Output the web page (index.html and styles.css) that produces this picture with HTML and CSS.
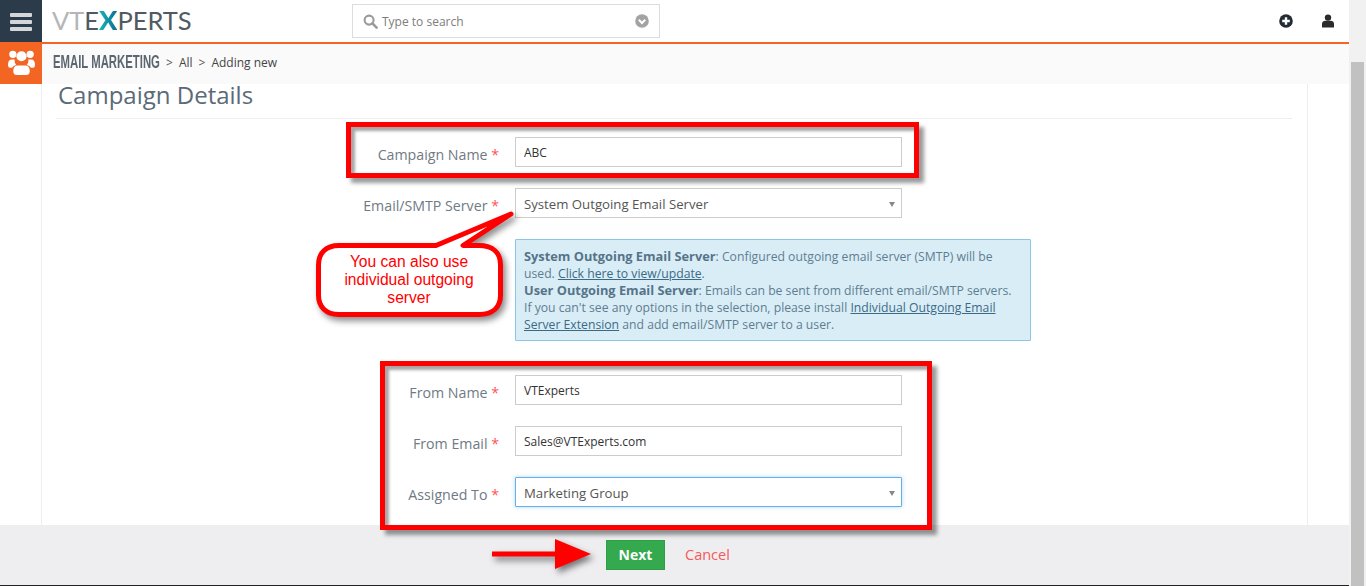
FILE: index.html
```html
<!DOCTYPE html>
<html lang="en">
<head>
    <meta charset="UTF-8">
    <meta name="viewport" content="width=device-width, initial-scale=1.0">
    <title>Email Marketing - Adding new</title>
    <link rel="stylesheet" href="styles.css">
</head>
<body>

    <div class="page">
        <div class="main">
            <header class="topbar">
                <div class="menu-tile">
                    <span class="bar"></span>
                    <span class="bar"></span>
                    <span class="bar"></span>
                </div>
                <div class="logo">
                    <span class="logo-light">VT</span><span>E</span><span class="logo-x">X</span><span>PERTS</span>
                </div>
                <div class="search">
                    <svg class="search-icon" viewBox="0 0 16 16" width="15" height="15">
                        <circle cx="6.5" cy="6.5" r="4.8" fill="none" stroke="#9a9a9a" stroke-width="2.2"/>
                        <path d="M10 10l4.5 4.5" stroke="#9a9a9a" stroke-width="2.8" stroke-linecap="round"/>
                    </svg>
                    <span class="search-text">Type to search</span>
                    <svg class="search-arrow" viewBox="0 0 14 14" width="14" height="14">
                        <circle cx="7" cy="7" r="6.8" fill="#a3a3a3"/>
                        <path d="M3.8 5.8L7 9l3.2-3.2" fill="none" stroke="#fff" stroke-width="2"/>
                    </svg>
                </div>
                <div class="top-icons">
                    <svg viewBox="0 0 14 14" width="14" height="14">
                        <circle cx="7" cy="7" r="6.8" fill="#222b33"/>
                        <path d="M7 3.2v7.6M3.2 7h7.6" stroke="#fff" stroke-width="2.4"/>
                    </svg>
                    <svg viewBox="0 0 14 14" width="14" height="14">
                        <circle cx="7" cy="3.6" r="3.2" fill="#2b2b2b"/>
                        <path d="M1 13.5V10c0-2 1.5-3.2 3.5-3.2h5c2 0 3.500 1.200 3.500 3.200v3.500z" fill="#2b2b2b"/>
                    </svg>
                </div>
            </header>

            <div class="subbar">
                <div class="module-tile">
                    <svg viewBox="0 0 28 26" width="27" height="25">
                        <circle cx="5" cy="4.500" r="3.800" fill="#fff"/>
                        <circle cx="23" cy="4.500" r="3.800" fill="#fff"/>
                        <circle cx="14" cy="6.500" r="5.300" fill="#fff"/>
                        <path d="M0 15c0-3 1.500-5 4-5h3c-.5 1.500 0 4 1.500 5.500-2 .5-3.500 1.500-4.300 3H2c-1.500 0-2-1.500-2-3.500z" fill="#fff"/>
                        <path d="M28 15c0-3-1.500-5-4-5h-3c.5 1.500 0 4-1.500 5.500 2 .5 3.500 1.500 4.300 3H26c1.500 0 2-1.500 2-3.500z" fill="#fff"/>
                        <path d="M5.500 21c0-3 2-5 4.500-5h8c2.500 0 4.500 2 4.500 5v1.500c0 2-1.500 3.500-3.500 3.500H9c-2 0-3.500-1.500-3.500-3.500z" fill="#fff"/>
                    </svg>
                </div>
                <div class="crumbs">
                    <span class="crumb-module">EMAIL MARKETING</span>
                    <span class="crumb-sep">&gt;</span>
                    <span>All</span>
                    <span class="crumb-sep">&gt;</span>
                    <span>Adding new</span>
                </div>
            </div>

            <div class="content">
                <div class="panel">
                    <h2 class="panel-title">Campaign Details</h2>
                    <div class="form">
                        <label class="field-label">Campaign Name <i>*</i></label>
                        <input class="field" type="text" value="ABC" readonly>

                        <label class="field-label">Email/SMTP Server <i>*</i></label>
                        <div class="select"><span>System Outgoing Email Server</span></div>

                        <div class="info-box">
                            <b>System Outgoing Email Server</b>: Configured outgoing email server (SMTP) will be<br>
                            used. <u>Click here to view/update</u>.<br>
                            <b>User Outgoing Email Server</b>: Emails can be sent from different email/SMTP servers.<br>
                            If you can't see any options in the selection, please install <u>Individual Outgoing Email</u><br>
                            <u>Server Extension</u> and add email/SMTP server to a user.
                        </div>

                        <label class="field-label from-first">From Name <i>*</i></label>
                        <input class="field from-first" type="text" value="VTExperts" readonly>

                        <label class="field-label">From Email <i>*</i></label>
                        <input class="field" type="text" value="Sales@VTExperts.com" readonly>

                        <label class="field-label">Assigned To <i>*</i></label>
                        <div class="select focused"><span>Marketing Group</span></div>
                    </div>
                </div>
            </div>

            <footer class="actions">
                <button class="btn-next">Next</button>
                <a class="cancel">Cancel</a>
            </footer>
        </div>

        <div class="scrollbar"><div class="thumb"></div></div>
    </div>

    <!-- annotations drawn over the screenshot -->
    <div class="mark mark-name"></div>
    <div class="mark mark-from"></div>

    <svg class="callout" viewBox="0 0 215 112" width="215" height="112">
        <path d="M36 34.500H133L208 3L160 34.500H176C190 34.500 197.500 42 197.500 54V84C197.500 96 190 103.500 176 103.500H36C23 103.500 15.500 96 15.500 84V54C15.500 42 23 34.500 36 34.500Z"
              fill="#fff" stroke="#f00" stroke-width="5" stroke-linejoin="round"/>
    </svg>
    <div class="callout-text">You can also use<br>individual outgoing<br>server</div>

    <svg class="arrow" viewBox="0 0 102 32" width="102" height="32">
        <path d="M1 12.500H64V0L100 15L64 30V17.500H1z" fill="#f00"/>
    </svg>

</body>
</html>
```

FILE: styles.css
```css
/* base */
html, body {
    margin: 0;
    height: 100%;
    overflow: hidden;
}

body {
    font-family: "Open Sans", Arial, sans-serif;
    font-size: 13px;
    color: #333;
    background: #fff;
}

.page {
    display: flex;
    height: 586px;
}

.main {
    flex: 1;
    display: flex;
    flex-direction: column;
    min-width: 0;
}

/* top bar */
.topbar {
    display: flex;
    align-items: center;
    height: 42px;
    border-bottom: 2px solid #f26522;
    background: #fff;
}

.menu-tile {
    width: 42px;
    height: 42px;
    background: #2c3b4a;
    display: flex;
    flex-direction: column;
    align-items: center;
    justify-content: center;
    gap: 3px;
    margin-right: 10px;
    box-sizing: border-box;
    padding-top: 1px;
}

.bar {
    width: 22px;
    height: 4px;
    border-radius: 1px;
    background: #d3d7db;
}

.logo {
    width: 300px;
    font-family: Lato, sans-serif;
    font-weight: 400;
    font-size: 25.5px;
    line-height: 40px;
    color: #4f5a62;
    margin-bottom: 2px;
}

.logo-light {
    color: #b4b6b8;
}

.logo-x {
    font-weight: 900;
    font-size: 27px;
    background: linear-gradient(90deg, #19b6b4, #0b6f96);
    -webkit-background-clip: text;
    background-clip: text;
    color: transparent;
}

.search {
    width: 308px;
    height: 34px;
    box-sizing: border-box;
    border: 1px solid #dcdcdc;
    display: flex;
    align-items: center;
    padding: 0 10px;
}

.search-icon {
    margin-right: 4px;
}

.search-text {
    flex: 1;
    color: #7d7d7d;
    font-size: 12px;
}

.top-icons {
    margin-left: auto;
    display: flex;
    align-items: center;
    gap: 28px;
    padding-right: 14px;
}

/* breadcrumb bar */
.subbar {
    display: flex;
    align-items: center;
    height: 40px;
    background: #fafafa;
}

.module-tile {
    width: 42px;
    height: 40px;
    background: #f26522;
    display: flex;
    align-items: center;
    justify-content: center;
    padding-bottom: 3px;
    box-sizing: border-box;
}

.crumbs {
    display: flex;
    align-items: center;
    gap: 6px;
    margin-left: 11px;
    padding-bottom: 4px;
    font-size: 12px;
    color: #444;
}

.crumb-module {
    font-family: "Liberation Sans", Arial, sans-serif;
    font-weight: 700;
    font-size: 18px;
    color: #5b6670;
    display: inline-block;
    width: 107px;
    white-space: nowrap;
    transform: scaleX(.63);
    transform-origin: left center;
}

.crumb-sep {
    color: #555;
}

/* form panel */
.content {
    flex: 1;
    min-height: 0;
    padding-left: 41px;
    padding-right: 41px;
}

.panel {
    height: 100%;
    border-left: 1px solid #eee;
    border-right: 1px solid #eee;
    padding: 0 15px 0 14px;
}

.panel-title {
    margin: 0 0 18px;
    height: 34px;
    line-height: 22px;
    font-size: 24px;
    font-weight: 400;
    color: #5b6a78;
    padding-left: 2px;
    border-bottom: 1px solid #eee;
}

.form {
    display: grid;
    grid-template-columns: 443px 387px;
    column-gap: 16px;
    row-gap: 21px;
    align-items: center;
}

.field-label {
    text-align: right;
    font-size: 14.2px;
    color: #6f7a84;
    padding-top: 5px;
}

.field-label i {
    font-style: normal;
    color: #f55;
}

.field, .select {
    height: 30px;
    box-sizing: border-box;
    border: 1px solid #ccc;
    background: #fff;
    padding: 0 8px;
    font-family: "Open Sans", Arial, sans-serif;
    font-size: 12px;
    color: #333;
    outline: 0;
    width: 100%;
    display: block;
}

.select {
    display: flex;
    align-items: center;
    position: relative;
    color: #555;
    font-size: 13.2px;
    padding-top: 1px;
}

.select::after {
    content: "";
    position: absolute;
    right: 6px;
    top: 13px;
    border-left: 3px solid transparent;
    border-right: 3px solid transparent;
    border-top: 5px solid #888;
}

.select.focused {
    border-color: #66afe9;
    box-shadow: 0 0 4px rgba(102, 175, 233, .5);
    border-radius: 1px;
}

.info-box {
    grid-column: 2;
    width: 516px;
    height: 102px;
    box-sizing: border-box;
    background: #d9edf7;
    border: 1px solid #8cc6e6;
    border-radius: 1px;
    padding: 8px 8px;
    font-size: 12.2px;
    line-height: 17px;
    white-space: nowrap;
    color: #5f7d90;
}

.info-box b {
    font-weight: 700;
    font-size: 12.8px;
    color: #557488;
}

.info-box u {
    color: #3b6a85;
}

.from-first {
    margin-top: 13px;
}

label.from-first {
    margin-top: 13px;
}

/* footer */
.actions {
    height: 61px;
    background: #eeedf0;
    border-bottom: 1px solid #222;
    display: flex;
    align-items: center;
    padding-left: 606px;
    gap: 20px;
    box-sizing: border-box;
    flex: none;
}

.btn-next {
    width: 59px;
    height: 30px;
    border: 1px solid #2f9e46;
    background: #34a94d;
    color: #fff;
    font-family: "Open Sans", Arial, sans-serif;
    font-size: 14px;
    font-weight: 700;
    padding: 0 0 2px;
}

.cancel {
    color: #f55a5a;
    font-size: 14.5px;
    margin-bottom: 2px;
}

/* scrollbar */
.scrollbar {
    width: 17px;
    background: #f1f1f1;
    flex: none;
    padding: 62px 2px 0;
    box-sizing: border-box;
}

.thumb {
    height: 100%;
    background: #c1c1c1;
}

/* red annotations */
.mark {
    position: absolute;
    box-sizing: border-box;
    border: 5px solid #f00;
    box-shadow: 5px 5px 4px rgba(0, 0, 0, .4), inset 4px 4px 3px rgba(0, 0, 0, .35);
}

.mark-name {
    left: 346px;
    top: 122px;
    width: 573px;
    height: 56px;
}

.mark-from {
    left: 380px;
    top: 361px;
    width: 552px;
    height: 169px;
}

.callout {
    position: absolute;
    left: 303px;
    top: 211px;
    filter: drop-shadow(3px 4px 3px rgba(0, 0, 0, .45));
}

.callout-text {
    position: absolute;
    left: 316px;
    top: 253px;
    width: 186px;
    text-align: center;
    font-family: "Liberation Sans", Arial, sans-serif;
    font-size: 15.6px;
    line-height: 18px;
    color: #f00;
}

.arrow {
    position: absolute;
    left: 491px;
    top: 539px;
    filter: drop-shadow(3px 4px 3px rgba(0, 0, 0, .5));
}
```
